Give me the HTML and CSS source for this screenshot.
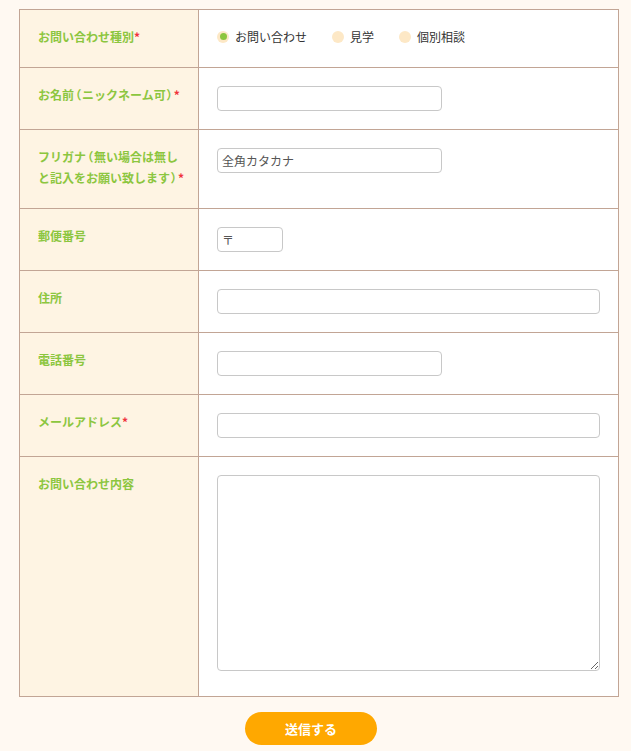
FILE: index.html
```html
<!DOCTYPE html>
<html lang="ja">
  <head>
    <meta charset="UTF-8" />
    <meta name="viewport" content="width=device-width, initial-scale=1.0" />
    <title>お問い合わせ</title>
    <link rel="stylesheet" href="styles.css">
  </head>
  <body>
    <form class="contact-form" id="contactForm">
      <table class="form-table">
        <tr>
          <th>お問い合わせ種別<span class="req">*</span></th>
          <td class="radio-cell">
            <div class="radio-group">
              <label class="radio-item">
                <input type="radio" name="kind" value="inquiry" checked />
                <span>お問い合わせ</span>
              </label>
              <label class="radio-item">
                <input type="radio" name="kind" value="visit" />
                <span>見学</span>
              </label>
              <label class="radio-item">
                <input type="radio" name="kind" value="consult" />
                <span>個別相談</span>
              </label>
            </div>
          </td>
        </tr>
        <tr>
          <th>お名前<span class="paren">（</span>ニックネーム可<span class="paren">）</span><span class="req">*</span></th>
          <td><input type="text" class="field field-mid" name="name" /></td>
        </tr>
        <tr>
          <th>フリガナ<span class="paren">（</span>無い場合は無し<br />と記入をお願い致します<span class="paren">）</span><span class="req">*</span></th>
          <td><input type="text" class="field field-mid" name="kana" placeholder="全角カタカナ" /></td>
        </tr>
        <tr>
          <th>郵便番号</th>
          <td><input type="text" class="field field-zip" name="zip" placeholder="〒" /></td>
        </tr>
        <tr>
          <th>住所</th>
          <td><input type="text" class="field field-full" name="address" /></td>
        </tr>
        <tr>
          <th>電話番号</th>
          <td><input type="tel" class="field field-mid" name="tel" /></td>
        </tr>
        <tr>
          <th>メールアドレス<span class="req">*</span></th>
          <td><input type="email" class="field field-full" name="email" /></td>
        </tr>
        <tr>
          <th>お問い合わせ内容</th>
          <td><textarea class="field field-area" name="message"></textarea></td>
        </tr>
      </table>

      <div class="submit-row">
        <button type="button" class="submit-button">送信する</button>
      </div>
    </form>
  </body>
</html>
```

FILE: styles.css
```css
body {
  font-family: "Noto Sans CJK JP", "Noto Sans", sans-serif;
  background-color: #fff9f2;
  margin: 0;
  padding: 9px 0 0 19px;
  color: #333;
}

.contact-form {
  width: 600px;
}

.form-table {
  width: 600px;
  border-collapse: collapse;
  table-layout: fixed;
}

.form-table th,
.form-table td {
  border: 1px solid #c2a595;
  vertical-align: top;
  font-size: 12px;
  line-height: 21px;
}

.form-table th {
  width: 150px;
  padding: 16px 10px 20px 18px;
  background-color: #fef4e3;
  color: #8cc63f;
  font-weight: bold;
  text-align: left;
  white-space: nowrap;
}

.form-table td {
  padding: 18px;
  background-color: #fff;
}

.form-table td.radio-cell {
  padding: 16px 18px 20px;
}

.paren {
  font-feature-settings: "palt";
  margin: 0 1px;
}

.req {
  color: #f0323c;
}

.radio-group {
  display: flex;
  align-items: center;
  gap: 25px;
}

.radio-item {
  display: flex;
  align-items: center;
  gap: 6px;
  cursor: pointer;
}

.radio-item input {
  appearance: none;
  -webkit-appearance: none;
  width: 12px;
  height: 12px;
  margin: 0;
  border-radius: 50%;
  background-color: #fde8c6;
  display: grid;
  place-content: center;
}

.radio-item input:checked::before {
  content: "";
  width: 7px;
  height: 7px;
  border-radius: 50%;
  background-color: #8cc63f;
}

.field {
  display: block;
  box-sizing: border-box;
  height: 25px;
  padding: 2px 4px;
  border: 1px solid #c8c8c8;
  border-radius: 4px;
  font-family: inherit;
  font-size: 12px;
  color: #333;
  background-color: #fff;
}

.field::placeholder {
  color: #555;
}

.field-mid {
  width: 225px;
}

.field-zip {
  width: 66px;
}

.field-full {
  width: 100%;
}

.field-area {
  width: 100%;
  height: 196px;
  margin-bottom: 7px;
  resize: both;
}

.submit-row {
  display: flex;
  justify-content: center;
  padding: 15px 16px 0 0;
}

.submit-button {
  width: 132px;
  height: 33px;
  border: none;
  border-radius: 17px;
  background-color: #ffa800;
  color: #fff;
  font-family: inherit;
  font-weight: bold;
  font-size: 13px;
  cursor: pointer;
}

.submit-button:hover {
  background-color: #f59c00;
}
```
